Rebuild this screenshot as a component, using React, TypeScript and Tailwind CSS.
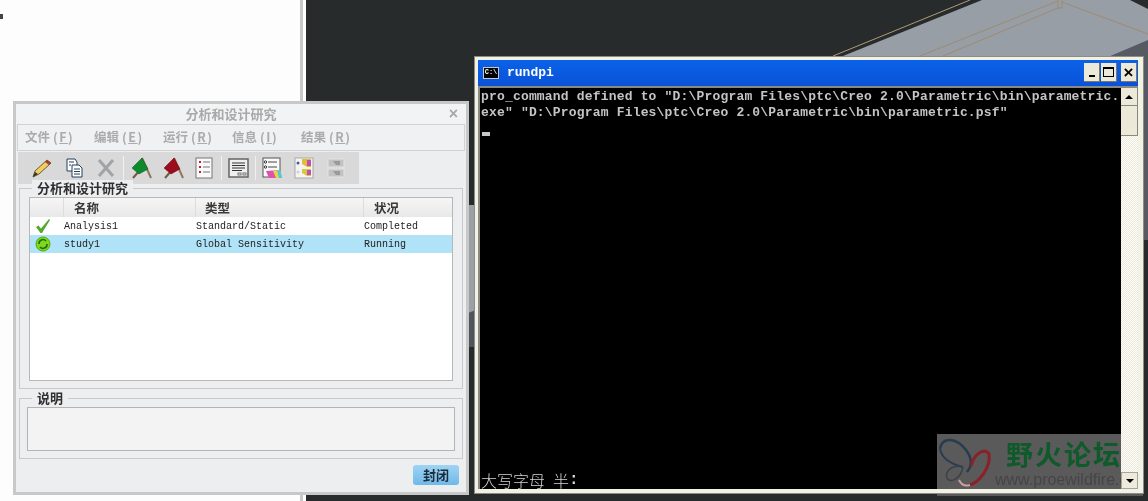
import type { ReactNode } from "react";

const mono = "font-['Liberation_Mono',monospace]";
const cjk = "font-['Noto_Sans_CJK_SC','Liberation_Sans',sans-serif]";

const menus = [
  { label: "文件", key: "F" },
  { label: "编辑", key: "E" },
  { label: "运行", key: "R" },
  { label: "信息", key: "I" },
  { label: "结果", key: "R" },
];

const rows = [
  { name: "Analysis1", type: "Standard/Static", state: "Completed", selected: false },
  { name: "study1", type: "Global Sensitivity", state: "Running", selected: true },
];

function Icon({ children }: { children: ReactNode }) {
  return (
    <svg width="32" height="24" viewBox="0 0 32 24" className="shrink-0">
      {children}
    </svg>
  );
}

function Flag({ fill, dark }: { fill: string; dark: string }) {
  return (
    <Icon>
      <path d="M17 2 L26 22" stroke="#94785c" strokeWidth="2" />
      <path d="M15 14 L8 22" stroke="#7a5a40" strokeWidth="2" />
      <path d="M7 12 L17 2 L23 13 L14 18 Z" fill={fill} stroke={dark} strokeWidth="0.5" />
    </Icon>
  );
}

function Toolbar() {
  return (
    <div className="ml-[2px] mt-[1px] flex h-[32px] w-[341px] items-center bg-[#d9d9d9] pl-[7px]">
      <div className="flex w-[98px]">
        <Icon>
          <path d="M8 21 L10 15 L22 4 L26 7 L14 18 Z" fill="#f2d060" stroke="#6a5a30" strokeWidth="1" />
          <path d="M22 4 L26 7 L24 9 L20 6 Z" fill="#a04030" />
          <path d="M8 21 L10 16 L13 18 Z" fill="#333" />
        </Icon>
        <Icon>
          <path d="M10 3 H18 L20 6 V15 H10 Z" fill="#fff" stroke="#24405c" />
          <path d="M15 9 H22 L25 12 V21 H15 Z" fill="#fff" stroke="#24405c" />
          <path d="M17 13 H23 M17 15.5 H23 M17 18 H23 M12 6 H17 M12 9 H14" stroke="#24405c" />
        </Icon>
        <Icon>
          <path d="M10 4 L24 20 M24 4 L10 20" stroke="#a0a4a4" strokeWidth="3" />
        </Icon>
      </div>
      <div className="flex w-[98px] border-l border-[#f0f0f0] pl-[1px]">
        <Flag fill="#0c8a2c" dark="#06501a" />
        <Flag fill="#9c0c1c" dark="#600810" />
        <div className="-ml-[1px]">
          <Icon>
            <rect x="8" y="2" width="16" height="20" fill="#fafafa" stroke="#777" />
            <path d="M11 6 H13 M11 11 H13 M11 16 H13" stroke="#c02030" strokeWidth="2" />
            <path d="M15 6 H22 M15 11 H22 M15 16 H22" stroke="#777" />
          </Icon>
        </div>
      </div>
      <div className="flex w-[34px] border-l border-[#f0f0f0]">
        <Icon>
          <rect x="7" y="3" width="19" height="18" fill="#efefef" stroke="#666" strokeWidth="1.5" />
          <path d="M10 7 H23 M10 9.5 H23 M10 12 H23 M10 14.5 H20" stroke="#333" />
          <rect x="16" y="17" width="3" height="2" fill="none" stroke="#777" />
          <rect x="21" y="17" width="3" height="2" fill="none" stroke="#777" />
        </Icon>
      </div>
      <div className="flex border-l border-[#f0f0f0]">
        <Icon>
          <rect x="7" y="2" width="17" height="19" fill="#fafafa" stroke="#555" />
          <path d="M12 6 H21 M12 11 H21" stroke="#444" />
          <circle cx="9.5" cy="6" r="1.2" fill="none" stroke="#333" />
          <circle cx="9.5" cy="11" r="1.2" fill="none" stroke="#333" />
          <path d="M10 15 L24 14 L26 22 L13 22 Z" fill="#e050b0" />
          <path d="M17 15 L24 14 L26 22 L20 22 Z" fill="#e8d840" />
          <path d="M21 14.5 L24 14 L26 22 L23 22 Z" fill="#50c8d8" />
        </Icon>
        <Icon>
          <rect x="7" y="2" width="18" height="20" fill="#f4f4f4" stroke="#aaa" />
          <circle cx="10" cy="7" r="1.5" fill="#4060a0" />
          <circle cx="10" cy="16" r="1.5" fill="#d0d0d0" />
          <path d="M14 3 H23 V11 H19 L14 8 Z" fill="#e0c030" />
          <path d="M14 13 H23 V20 H19 L14 17 Z" fill="#d8c840" />
          <path d="M19 4 H23 V10 H19 Z M19 14 H23 V19 H19 Z" fill="#c050b0" />
        </Icon>
        <Icon>
          <rect x="8" y="3" width="16" height="8" fill="#c2c2c2" stroke="#e4e4e4" />
          <rect x="8" y="13" width="16" height="8" fill="#c2c2c2" stroke="#e4e4e4" />
          <path d="M13 5 H20 V9 H16 Z M13 15 H20 V19 H16 Z" fill="#9a9a9a" />
        </Icon>
      </div>
    </div>
  );
}

function GroupTitle({ children }: { children: ReactNode }) {
  return (
    <span className={`absolute left-[12px] top-[-9px] bg-[#eceef0] px-[5px] text-[13px] leading-[16px] font-bold text-[#303030] ${cjk}`}>
      {children}
    </span>
  );
}

function AnalysisDialog() {
  return (
    <div className="absolute left-[13px] top-[101px] flex h-[394px] w-[456px] flex-col border-[3px] border-[#c8c8c8] bg-[#eceef0]">
      <div className={`relative flex h-[20px] shrink-0 items-center justify-center bg-[#f2f3f4] pr-[20px] text-[13px] font-bold text-[#a9a9a9] ${cjk}`}>
        分析和设计研究
        <span className="absolute right-[8px] top-[1px] font-['Liberation_Sans',sans-serif] text-[16px] leading-[18px] text-[#a8a8a8]">×</span>
      </div>
      <div className="ml-[1px] mr-[1px] flex h-[27px] shrink-0 items-center border border-[#d2d2d2] bg-[#f0f1f2] pl-[7px]">
        {menus.map((menu) => (
          <div key={menu.label} className={`w-[69px] text-[12.5px] font-bold text-[#ababab] ${cjk}`}>
            {menu.label}
            <span className="ml-[3px] tracking-[1.5px]">
              (<span className="underline">{menu.key}</span>)
            </span>
          </div>
        ))}
      </div>
      <Toolbar />

      <div className="relative mx-[3px] mt-[4px] h-[201px] shrink-0 border border-[#c9c9c9] px-[9px] pt-[8px]">
        <GroupTitle>分析和设计研究</GroupTitle>
        <div className="h-[184px] border border-[#b8b8b8] bg-white">
          <div className={`flex h-[19px] bg-gradient-to-b from-[#f6f6f6] to-[#e8e8e8] text-[12.5px] leading-[20px] font-bold text-[#383838] ${cjk}`}>
            <div className="w-[33px]" />
            <div className="w-[132px] border-l border-[#dcdcdc] pl-[10px]">名称</div>
            <div className="w-[168px] border-l border-[#dcdcdc] pl-[9px]">类型</div>
            <div className="flex-1 border-l border-[#dcdcdc] pl-[10px]">状况</div>
          </div>
          {rows.map((row) => (
            <div
              key={row.name}
              className={`flex h-[18px] items-center text-[10px] text-[#222] ${mono} ${row.selected ? "bg-[#b0e2f8]" : "bg-white"}`}
            >
              <div className="flex w-[34px] justify-center pr-[8px]">
                {row.selected ? (
                  <svg width="16" height="16" viewBox="0 0 16 16">
                    <circle cx="8" cy="8" r="7" fill="#80d818" stroke="#58a810" />
                    <path d="M4 8 A4 4 0 0 1 11 5 M12 8 A4 4 0 0 1 5 11" fill="none" stroke="#1c7010" strokeWidth="1.6" />
                  </svg>
                ) : (
                  <svg width="16" height="16" viewBox="0 0 16 16">
                    <path d="M1 9 L3.5 7.5 L6 10.5 L14 1 L15 2 L7 15 L5.5 15 Z" fill="#55a830" />
                  </svg>
                )}
              </div>
              <div className="w-[132px]">{row.name}</div>
              <div className="w-[168px]">{row.type}</div>
              <div>{row.state}</div>
            </div>
          ))}
        </div>
      </div>

      <div className="relative mx-[3px] mt-[9px] h-[61px] shrink-0 border border-[#c9c9c9] px-[7px] pt-[8px]">
        <GroupTitle>说明</GroupTitle>
        <div className="h-[44px] border border-[#b4b4b4] bg-[#f3f3f3]" />
      </div>

      <div className="mr-[7px] mt-[6px] flex justify-end">
        <button className={`h-[20px] w-[46px] rounded-[3px] bg-gradient-to-b from-[#9fd4f4] to-[#6fb8e8] text-[13px] leading-[20px] font-bold text-[#1c2c3c] ${cjk}`}>
          封闭
        </button>
      </div>
    </div>
  );
}

function WindowButton({ children }: { children: ReactNode }) {
  return <div className="flex h-[19px] w-[16px] items-center justify-center border-r border-b border-[#7a7868] bg-[#ece9d8]">{children}</div>;
}

function ConsoleWindow() {
  return (
    <div className="absolute left-[475px] top-[57px] flex h-[436px] w-[668px] flex-col border-[3px] border-r-[5px] border-b-[4px] border-[#f2f1e6] outline outline-[1px] outline-[#8c8c84]">
      <div className="flex h-[26px] shrink-0 items-center bg-gradient-to-b from-[#0a62e8] to-[#0a52d8] pb-[1px] pl-[5px] pr-[1px]">
        <div className={`flex h-[12px] w-[16px] items-center justify-center border border-[#c8c8c8] bg-black text-[7px] font-bold text-white ${mono}`}>
          C:\
        </div>
        <span className={`ml-[8px] text-[13px] font-bold text-white ${mono}`}>rundpi</span>
        <div className="ml-auto flex items-center gap-[1px]">
          <WindowButton>
            <div className="mt-[8px] h-[2px] w-[6px] bg-black" />
          </WindowButton>
          <WindowButton>
            <div className="h-[10px] w-[11px] border border-t-2 border-black" />
          </WindowButton>
          <div className="w-[2px]" />
          <WindowButton>
            <span className="font-['Liberation_Sans',sans-serif] text-[17px] leading-[17px] font-bold text-black">×</span>
          </WindowButton>
        </div>
      </div>
      <div className="flex min-h-0 flex-1 border-t-[2px] border-l-[2px] border-[#8a8a84]">
        <div className="relative flex-1 bg-black pl-[1px] pt-[1px]">
          <div className={`whitespace-pre text-[13px] leading-[16px] font-bold tracking-[0.18px] text-[#c4c4c4] ${mono}`}>
            {'pro_command defined to "D:\\Program Files\\ptc\\Creo 2.0\\Parametric\\bin\\parametric.\nexe" "D:\\Program Files\\ptc\\Creo 2.0\\Parametric\\bin\\parametric.psf"'}
          </div>
          <div className="ml-[1px] mt-[11px] h-[4px] w-[8px] bg-[#c8c8c8]" />
          <div className={`absolute bottom-[0px] left-[1px] flex text-[16px] leading-[18px] font-light text-[#d4d4d4] ${cjk}`}>
            大写字母<span className="ml-[8px]">半</span>
            <span className={`font-bold ${mono}`}>:</span>
          </div>
        </div>
        <div className="relative z-20 flex w-[17px] shrink-0 flex-col bg-[repeating-conic-gradient(#ffffff_0_25%,#ece9d8_0_50%)] bg-[length:2px_2px]">
          <div className="flex h-[18px] items-center justify-center border-r border-b border-[#8a887a] bg-[#ece9d8]">
            <div className="h-0 w-0 border-x-[4px] border-b-[4px] border-x-transparent border-b-black" />
          </div>
          <div className="h-[30px] border-r border-b border-[#8a887a] bg-[#ece9d8]" />
          <div className="mt-auto flex h-[17px] items-center justify-center border border-[#a8a69a] bg-[#ece9d8]/80">
            <div className="h-0 w-0 border-x-[4px] border-t-[4px] border-x-transparent border-t-black" />
          </div>
        </div>
      </div>
    </div>
  );
}

function Watermark() {
  return (
    <>
      <div className="absolute left-[937px] top-[434px] z-10 h-[62px] w-[206px] bg-[#5a5a5a] mix-blend-lighten" />
      <div className="absolute left-[937px] top-[434px] z-10 flex h-[62px] w-[206px] overflow-hidden">
        <svg width="60" height="62" viewBox="0 0 60 62" className="shrink-0">
          <path d="M3 14 C6 2 20 4 29 16 C35 24 35 32 30 38" fill="none" stroke="#283c50" strokeWidth="2.5" />
          <path d="M3 14 C4 24 14 30 26 33" fill="none" stroke="#283c50" strokeWidth="2" />
          <path d="M34 32 C38 18 48 14 52 20 C54 34 42 48 33 51" fill="none" stroke="#8c2028" strokeWidth="3" />
          <path d="M33 51 C27 53 24 50 22 46" fill="none" stroke="#c8a0a0" strokeWidth="2" />
          <path d="M26 33 C14 30 8 38 10 44 C14 50 24 44 26 33" fill="none" stroke="#3c4048" strokeWidth="1.5" />
        </svg>
        <div className="ml-[9px] min-w-0 whitespace-nowrap">
          <div className={`mt-[4px] text-[27px] leading-[32px] font-bold tracking-[2px] text-[#0e5a2a] ${cjk}`}>野火论坛</div>
          <div className="-ml-[11px] mt-[1px] font-['Liberation_Sans',sans-serif] text-[16px] leading-[18px] text-[#454545]">www.proewildfire.cn</div>
        </div>
      </div>
    </>
  );
}

export default function App() {
  return (
    <div className="relative flex h-[501px] w-[1148px] overflow-hidden bg-[#282b2c]">
      <div className="h-full w-[306px] shrink-0 bg-white">
        <div className="h-full w-[303px] border-r-[3px] border-[#c8c8c8] bg-[#fdfdfd] pt-[14px]">
          <div className="h-[5px] w-[3px] bg-[#444]" />
        </div>
      </div>
      <svg className="absolute inset-0" width="1148" height="501" viewBox="0 0 1148 501">
        <path d="M982 0 H1130 L1148 9 V60 H833 Z" fill="#979ea5" />
        <path d="M1108 57 L1148 40 V240 H1140 V57 Z" fill="#565b63" />
        <path d="M468 205 H476 V313 H468 Z" fill="#9aa0a6" />
        <path d="M468 313 L476 310 V347 H468 Z" fill="#50545c" />
        <path d="M833 56 L970 0" stroke="#b09a78" strokeWidth="1" />
        <path d="M920 56 L1058 1 M943 56 L1058 8 M1058 0 V8 H1062 V0 M1062 2 L1148 34" stroke="#a08a72" strokeWidth="1" fill="none" />
      </svg>
      <AnalysisDialog />
      <ConsoleWindow />
      <Watermark />
    </div>
  );
}
